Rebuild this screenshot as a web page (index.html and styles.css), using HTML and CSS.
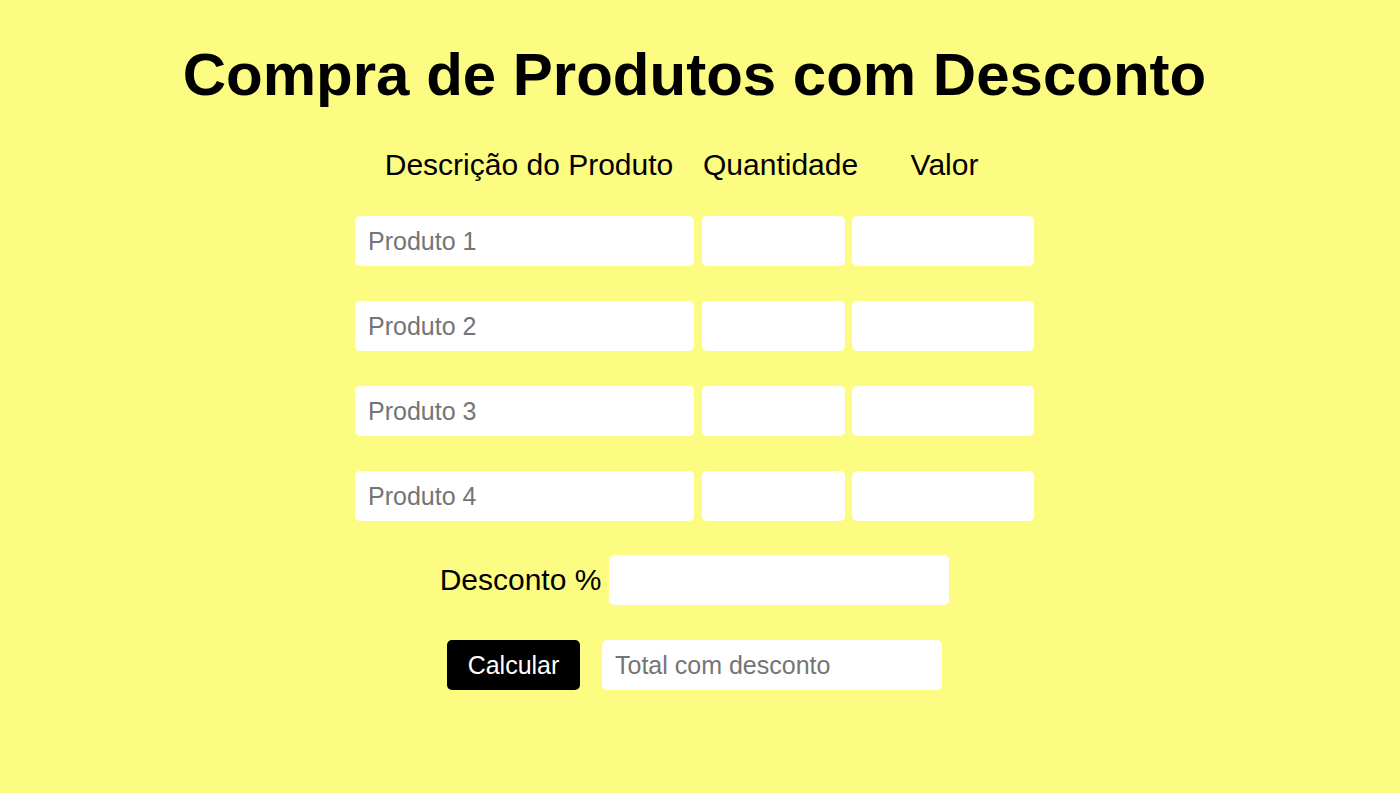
FILE: index.html
```html
<!DOCTYPE html>
<html lang="pt-BR">
<head>
<meta charset="utf-8">
<title>Compra de Produtos com Desconto</title>
<link rel="stylesheet" href="styles.css">
</head>
<body>
<main class="page">
  <h1 class="title">Compra de Produtos com Desconto</h1>
  <section class="table">
    <div class="table-head">
      <div class="th th-desc">Descrição do Produto</div>
      <div class="th th-qtd">Quantidade</div>
      <div class="th th-val">Valor</div>
    </div>
    <div class="rows">
      <div class="row">
        <input class="field f-desc" type="text" placeholder="Produto 1">
        <input class="field f-qtd" type="text">
        <input class="field f-val" type="text">
      </div>
      <div class="row">
        <input class="field f-desc" type="text" placeholder="Produto 2">
        <input class="field f-qtd" type="text">
        <input class="field f-val" type="text">
      </div>
      <div class="row">
        <input class="field f-desc" type="text" placeholder="Produto 3">
        <input class="field f-qtd" type="text">
        <input class="field f-val" type="text">
      </div>
      <div class="row">
        <input class="field f-desc" type="text" placeholder="Produto 4">
        <input class="field f-qtd" type="text">
        <input class="field f-val" type="text">
      </div>
    </div>
  </section>
  <div class="discount">
    <label class="discount-label" for="desconto">Desconto %</label>
    <input id="desconto" class="field f-wide" type="text">
  </div>
  <div class="actions">
    <button class="btn" type="button">Calcular</button>
    <input class="field f-wide" type="text" placeholder="Total com desconto">
  </div>
</main>
</body>
</html>
```

FILE: styles.css
```css
* { box-sizing: border-box; }

html, body {
  margin: 0;
  padding: 0;
  background: #fcfc82;
  height: 100%;
}

body {
  font-family: "Liberation Sans", Arial, sans-serif;
  color: #000;
}

.page {
  width: 1389px;
  display: flex;
  flex-direction: column;
  align-items: center;
}

.title {
  margin: 40px 0 0;
  font-size: 60px;
  line-height: 69px;
  font-weight: bold;
  text-align: center;
}

.table {
  width: 679px;
  margin-top: 39px;
}

.table-head {
  display: flex;
  height: 34px;
}

.th {
  font-size: 30px;
  line-height: 34px;
  text-align: center;
  white-space: nowrap;
}

.th-desc { width: 348px; }
.th-qtd { width: 154px; }
.th-val { width: 175px; }

.rows {
  margin-top: 34px;
  display: flex;
  flex-direction: column;
  gap: 35px;
}

.row {
  display: flex;
  height: 50px;
}

.field {
  height: 50px;
  border: none;
  outline: none;
  background: #fff;
  border-radius: 5px;
  padding: 0 13px;
  font-family: "Liberation Sans", Arial, sans-serif;
  font-size: 25px;
  color: #000;
}

.field::placeholder { color: #757575; }

.f-desc { width: 339px; }
.f-qtd { width: 143px; margin-left: 8px; }
.f-val { width: 182px; margin-left: 7px; }
.f-wide { width: 340px; }

.discount {
  margin-top: 34px;
  display: flex;
  align-items: center;
  gap: 8px;
}

.discount-label {
  font-size: 30px;
  line-height: 34px;
}

.actions {
  margin-top: 35px;
  display: flex;
  align-items: center;
  gap: 22px;
}

.btn {
  width: 133px;
  height: 50px;
  border: none;
  border-radius: 5px;
  background: #000;
  color: #fff;
  font-family: "Liberation Sans", Arial, sans-serif;
  font-size: 25px;
  padding: 0;
}
```
